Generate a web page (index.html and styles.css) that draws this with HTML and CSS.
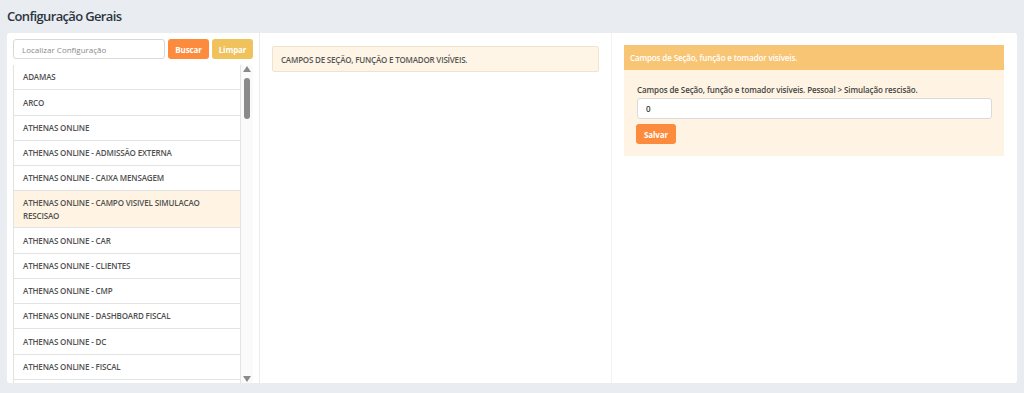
FILE: index.html
```html
<!DOCTYPE html>
<html lang="pt-BR">
<head>
<meta charset="utf-8">
<title>Configuração Gerais</title>
<link rel="stylesheet" href="styles.css">
</head>
<body>
<h1 class="page-title">Configuração Gerais</h1>
<div class="card">
  <div class="col col-left">
    <div class="search">
      <input class="search-input" type="text" placeholder="Localizar Configuração">
      <button class="btn btn-orange">Buscar</button>
      <button class="btn btn-yellow">Limpar</button>
    </div>
    <div class="list-wrap">
      <ul class="list">
        <li class="item">ADAMAS</li>
        <li class="item">ARCO</li>
        <li class="item">ATHENAS ONLINE</li>
        <li class="item">ATHENAS ONLINE - ADMISSÃO EXTERNA</li>
        <li class="item">ATHENAS ONLINE - CAIXA MENSAGEM</li>
        <li class="item active">ATHENAS ONLINE - CAMPO VISIVEL SIMULACAO RESCISAO</li>
        <li class="item">ATHENAS ONLINE - CAR</li>
        <li class="item">ATHENAS ONLINE - CLIENTES</li>
        <li class="item">ATHENAS ONLINE - CMP</li>
        <li class="item">ATHENAS ONLINE - DASHBOARD FISCAL</li>
        <li class="item">ATHENAS ONLINE - DC</li>
        <li class="item">ATHENAS ONLINE - FISCAL</li>
        <li class="item item-empty"></li>
      </ul>
      <div class="scrollbar">
        <svg class="arrow" width="8" height="6" viewBox="0 0 8 6"><path d="M4 0 L8 6 L0 6 Z" fill="#8a8a8a"/></svg>
        <div class="track"><div class="thumb"></div></div>
        <svg class="arrow" width="8" height="6" viewBox="0 0 8 6"><path d="M0 0 L8 0 L4 6 Z" fill="#8a8a8a"/></svg>
      </div>
    </div>
  </div>
  <div class="col col-mid">
    <div class="alert">CAMPOS DE SEÇÃO, FUNÇÃO E TOMADOR VISÍVEIS.</div>
  </div>
  <div class="col col-right">
    <div class="panel">
      <div class="panel-head">Campos de Seção, função e tomador visíveis.</div>
      <div class="panel-body">
        <label class="field-label">Campos de Seção, função e tomador visíveis. Pessoal &gt; Simulação rescisão.</label>
        <input class="field-input" type="text" value="0">
        <button class="btn btn-orange btn-save">Salvar</button>
      </div>
    </div>
  </div>
</div>
</body>
</html>
```

FILE: styles.css
```css
* { box-sizing: border-box; }
html, body { margin: 0; height: 100%; }
body {
  background: #e9ecf1;
  font-family: "Open Sans", Lato, "Liberation Sans", sans-serif;
  padding: 7px 7px 10px 7px;
  color: #555;
  overflow: hidden;
}
.page-title {
  margin: 0;
  height: 26px;
  font-size: 13px;
  line-height: 18px;
  font-weight: 600;
  color: #2d3540;
  letter-spacing: -0.65px;
}
.card {
  background: #fff;
  height: 350px;
  border-radius: 3px;
  display: grid;
  grid-template-columns: 253px 352px 1fr;
  overflow: hidden;
}
.col { min-height: 0; }
.col-left {
  border-right: 1px solid #ececec;
  padding: 6px 6px 0 6px;
  display: flex;
  flex-direction: column;
  min-height: 0;
}
.col-mid {
  border-right: 1px solid #f2f2f2;
  padding: 13px 12px 12px 12px;
}
.col-right {
  padding: 12px 13px 12px 12px;
}
.search {
  display: flex;
  gap: 3px;
  height: 20px;
}
.search-input {
  flex: 1;
  min-width: 0;
  height: 20px;
  border: 1px solid #d9d9d9;
  border-radius: 3px;
  padding: 0 8px;
  font-family: inherit;
  font-size: 8px;
  color: #555;
}
.search-input::placeholder { color: #8a8a8a; }
.btn {
  border: 0;
  border-radius: 3px;
  color: #fff;
  font-family: inherit;
  font-weight: 700;
  font-size: 8px;
  padding: 0 6px;
  height: 20px;
  letter-spacing: -0.1px;
}
.btn-orange { background: #fd8b3d; width: 41px; }
.btn-yellow { background: #efc25c; width: 41px; }
.list-wrap {
  margin-top: 6px;
  display: flex;
  flex: 1;
  min-height: 0;
}
.list {
  list-style: none;
  margin: 0;
  padding: 0;
  flex: 1;
  overflow: hidden;
  border-left: 1px solid #e3e3e3;
  border-right: 1px solid #e3e3e3;
}
.item {
  min-height: 25.25px;
  padding: 6px 9px 5px 9px;
  border-bottom: 1px solid #e3e3e3;
  font-size: 8px;
  line-height: 12.5px;
  font-weight: 600;
  color: #505050;
  display: flex;
  align-items: center;
  letter-spacing: -0.15px;
}
.item.active { background: #fff4e3; }
.scrollbar {
  width: 12px;
  display: flex;
  flex-direction: column;
  align-items: center;
  padding: 1px 0 1px 0;
  background: #fafafa;
}
.arrow { flex: none; }
.track {
  flex: 1;
  width: 100%;
  display: flex;
  justify-content: center;
  padding-top: 6px;
}
.thumb {
  width: 6px;
  height: 41px;
  border-radius: 3px;
  background: #8a8a8a;
}
.alert {
  background: #fff5e6;
  border: 1px solid #f0e3cd;
  border-radius: 2px;
  height: 26px;
  padding: 0 8px;
  display: flex;
  align-items: center;
  font-size: 8px;
  font-weight: 600;
  color: #555;
  letter-spacing: -0.2px;
}
.panel { background: #fff4e3; }
.panel-head {
  background: #f8c574;
  height: 25px;
  padding: 0 6px;
  display: flex;
  align-items: center;
  color: #fff;
  font-size: 8px;
  font-weight: 600;
  letter-spacing: -0.12px;
}
.panel-body {
  padding: 14px 12px 12px 13px;
  display: flex;
  flex-direction: column;
  align-items: flex-start;
}
.field-label {
  font-size: 8px;
  font-weight: 600;
  color: #444;
  line-height: 12px;
  letter-spacing: -0.1px;
}
.field-input {
  margin-top: 2px;
  width: 355px;
  height: 21px;
  border: 1px solid #dadada;
  border-radius: 3px;
  padding: 0 8px;
  font-family: inherit;
  font-size: 8px;
  color: #333;
  font-weight: 600;
}
.btn-save {
  margin-top: 5px;
  margin-left: -1px;
  width: 40px;
  height: 20px;
}
```
